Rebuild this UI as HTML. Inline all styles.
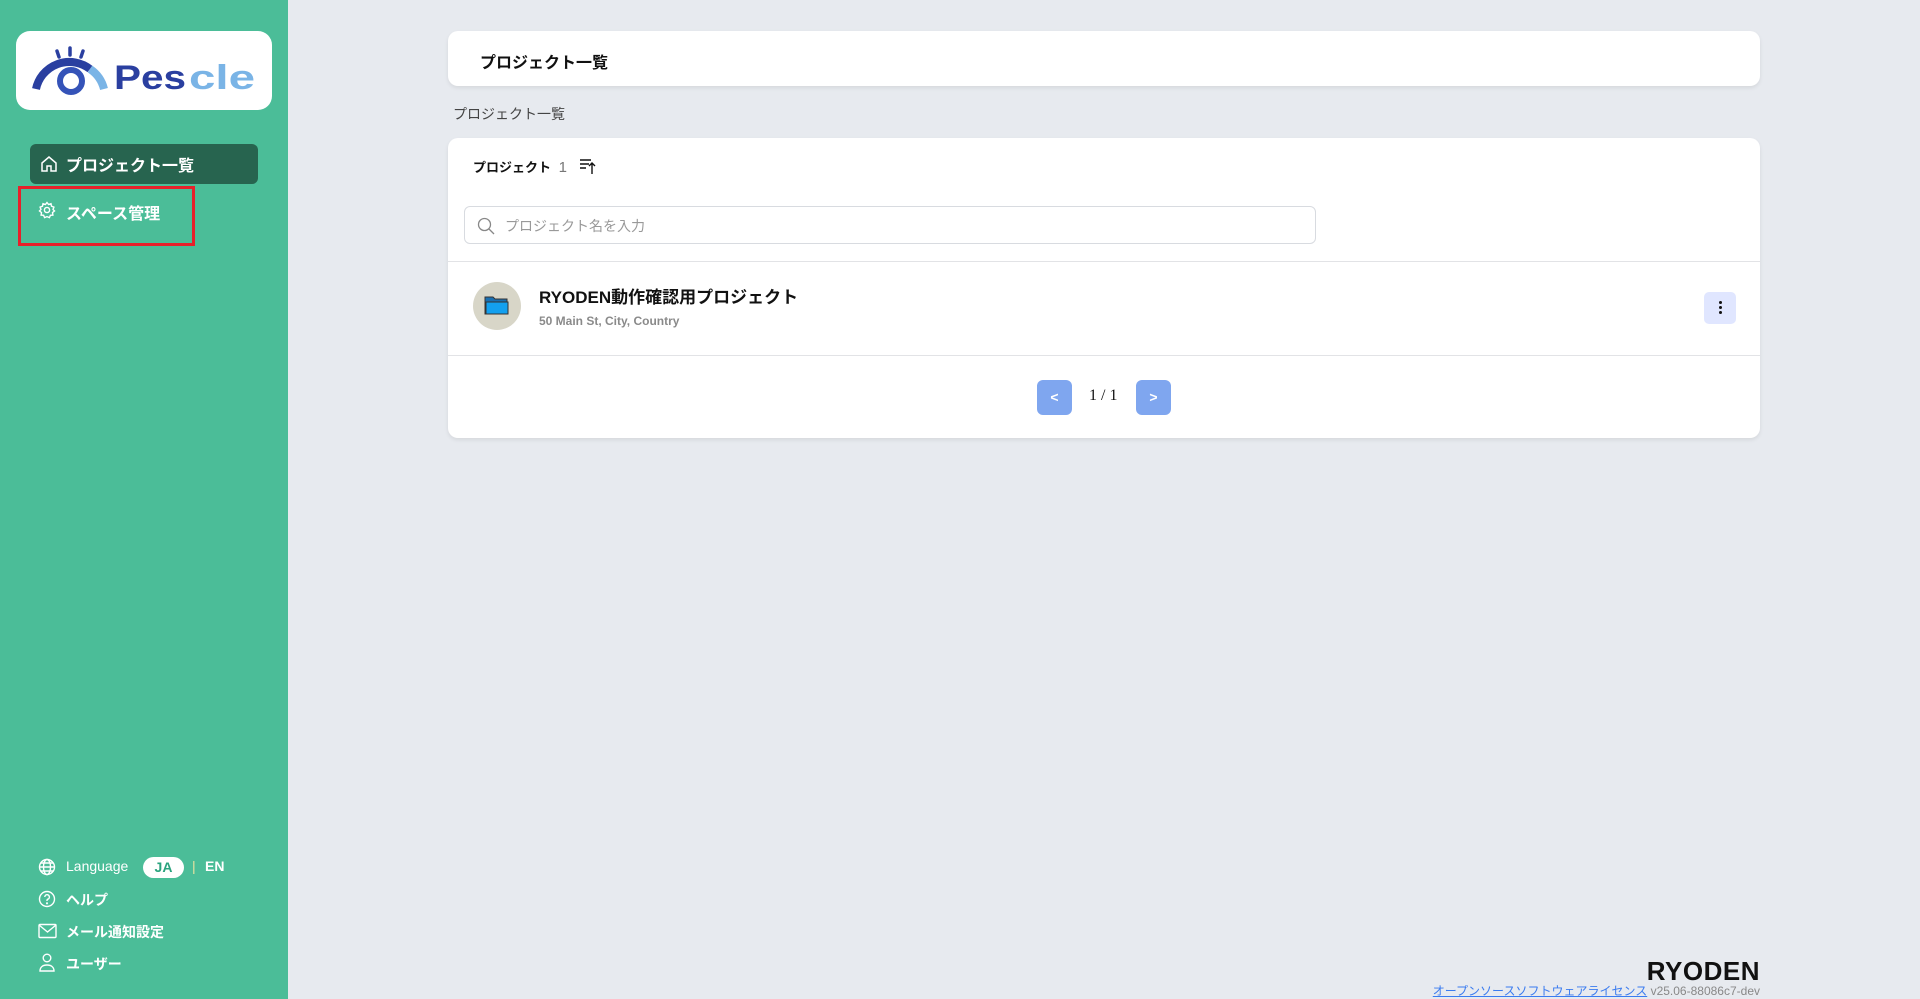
<!DOCTYPE html>
<html><head><meta charset="utf-8"><style>
*{box-sizing:border-box;margin:0;padding:0}
body{width:1920px;height:999px;overflow:hidden;background:#e7eaef;font-family:"Liberation Sans","Noto Sans CJK JP",sans-serif;position:relative;color:#111}
.side{position:absolute;left:0;top:0;width:288px;height:999px;background:#4bbd98}
.logo{position:absolute;left:16px;top:31px;width:256px;height:79px;background:#fff;border-radius:14px}
.nav{position:absolute;left:30px;top:144px;width:228px;height:40px;background:#27644f;border-radius:6px;color:#fff;font-size:16px;font-weight:bold;display:flex;align-items:center;padding-left:36px}
.nav2{position:absolute;left:66px;top:200px;color:#fff;font-size:16px;font-weight:bold}
.red{position:absolute;left:18px;top:186px;width:177px;height:60px;border:3px solid #e8202a}
.bi{position:absolute;left:66px;color:#fff;font-size:14px;font-weight:bold}
.ic{position:absolute;left:38px}
.card{position:absolute;left:448px;width:1312px;background:#fff;border-radius:10px;box-shadow:0 2px 4px rgba(0,0,0,.08)}
</style></head><body>
<div class="side">
 <div class="logo">
  <svg width="256" height="79" viewBox="0 0 256 79">
   <g stroke="#2a3fa0" stroke-width="3.5" stroke-linecap="round"><line x1="41" y1="20" x2="43" y2="26"/><line x1="54" y1="17" x2="54" y2="24"/><line x1="67" y1="20" x2="65" y2="26"/></g>
   <path d="M20 58 A34 34 0 0 1 74 38" fill="none" stroke="#2a3fa0" stroke-width="8"/>
   <path d="M74 38 A34 34 0 0 1 88 58" fill="none" stroke="#7ab4e6" stroke-width="8"/>
   <circle cx="55" cy="50" r="11" fill="none" stroke="#3553b8" stroke-width="6"/>
   <text x="98" y="58" font-family="Liberation Sans" font-weight="bold" font-size="34" fill="#2a3fa0" textLength="72" lengthAdjust="spacingAndGlyphs">Pes</text>
   <text x="173" y="58" font-family="Liberation Sans" font-weight="bold" font-size="34" fill="#7ab4e6" textLength="66" lengthAdjust="spacingAndGlyphs">cle</text>
  </svg>
 </div>
 <div class="nav"><svg style="position:absolute;left:10px;top:11px" width="18" height="18" viewBox="0 0 18 18" fill="none" stroke="#fff" stroke-width="1.5"><path d="M2 8L9 2l7 6v8H11v-5H7v5H2z"/></svg>プロジェクト一覧</div>
 <svg class="ic" style="top:201px" width="18" height="18" viewBox="0 0 18 18" fill="none" stroke="#fff" stroke-width="1.4"><circle cx="9" cy="9" r="2.6"/><path d="M9 1.5l1.6 2 2.4-.8.5 2.5 2.4.9-.9 2.4 1.5 1.5-2 1.6.4 2.5-2.5.2-1 2.3-2.4-1-2.4 1-1-2.3-2.5-.2.4-2.5-2-1.6 1.5-1.5-.9-2.4 2.4-.9.5-2.5 2.4.8z"/></svg>
 <div class="nav2">スペース管理</div>
 <div class="red"></div>
 <svg class="ic" style="top:858px" width="18" height="18" viewBox="0 0 18 18" fill="none" stroke="#fff" stroke-width="1.4"><circle cx="9" cy="9" r="7.5"/><ellipse cx="9" cy="9" rx="3.5" ry="7.5"/><path d="M1.5 9h15M3 5h12M3 13h12"/></svg>
 <div class="bi" style="top:858px;font-weight:normal">Language</div>
 <div style="position:absolute;left:143px;top:857px;width:41px;height:21px;border-radius:11px;background:#fff;color:#2aa37e;font-size:14px;font-weight:bold;text-align:center;line-height:21px">JA</div>
 <div class="bi" style="left:192px;top:858px;color:#e8e3a0;font-weight:normal">|</div>
 <div class="bi" style="left:205px;top:858px">EN</div>
 <svg class="ic" style="top:890px" width="18" height="18" viewBox="0 0 18 18" fill="none" stroke="#fff" stroke-width="1.4"><circle cx="9" cy="9" r="7.5"/><path d="M6.8 7a2.3 2.3 0 1 1 2.9 2.2c-.5.2-.7.6-.7 1.2v.6"/><circle cx="9" cy="13.3" r=".4" fill="#fff"/></svg>
 <div class="bi" style="top:890px">ヘルプ</div>
 <svg class="ic" style="top:923px" width="19" height="16" viewBox="0 0 19 16" fill="none" stroke="#fff" stroke-width="1.4"><rect x="1" y="1.5" width="17" height="13" rx="1"/><path d="M1 2l8.5 7L18 2"/></svg>
 <div class="bi" style="top:922px">メール通知設定</div>
 <svg class="ic" style="top:953px" width="18" height="19" viewBox="0 0 18 19" fill="none" stroke="#fff" stroke-width="1.4"><circle cx="9" cy="5" r="3.8"/><path d="M2 18c0-4 3-6 7-6s7 2 7 6z"/></svg>
 <div class="bi" style="top:954px">ユーザー</div>
</div>

<div class="card" style="top:31px;height:55px"><div style="position:absolute;left:32px;top:18px;font-size:16px;font-weight:bold">プロジェクト一覧</div></div>
<div style="position:absolute;left:453px;top:104px;font-size:14px;color:#444">プロジェクト一覧</div>

<div class="card" style="top:138px;height:300px">
 <div style="position:absolute;left:25px;top:19px;font-size:13px;font-weight:bold">プロジェクト <span style="font-weight:normal;color:#777;margin-left:4px;font-size:15px">1</span></div>
 <svg style="position:absolute;left:131px;top:19px" width="18" height="18" viewBox="0 0 18 18" fill="none" stroke="#111" stroke-width="1.4"><path d="M1 3h11M1 7h9M1 11h6M13 17V6M10 9l3-3 3 3"/></svg>
 <div style="position:absolute;left:16px;top:68px;width:852px;height:38px;border:1px solid #d8dbe0;border-radius:6px">
  <svg style="position:absolute;left:12px;top:10px" width="18" height="18" viewBox="0 0 18 18" fill="none" stroke="#888" stroke-width="1.3"><circle cx="7.5" cy="7.5" r="6"/><path d="M12 12l5 5"/></svg>
  <div style="position:absolute;left:40px;top:9px;font-size:14px;color:#999">プロジェクト名を入力</div>
 </div>
 <div style="position:absolute;left:0;top:123px;width:100%;height:1px;background:#e2e3e6"></div>
 <div style="position:absolute;left:25px;top:144px;width:48px;height:48px;border-radius:50%;background:#d8d6c8">
  <svg style="position:absolute;left:11px;top:12px" width="26" height="22" viewBox="0 0 26 22"><path d="M1 3h8l2 2h12v15H1z" fill="#1a6fb0" stroke="#333" stroke-width="1"/><path d="M2 8h22v12H2z" fill="#13a0ef" stroke="#333" stroke-width="1"/></svg>
 </div>
 <div style="position:absolute;left:91px;top:145px;font-size:17px;font-weight:bold">RYODEN動作確認用プロジェクト</div>
 <div style="position:absolute;left:91px;top:176px;font-size:12px;font-weight:bold;color:#8a8a8a">50 Main St, City, Country</div>
 <div style="position:absolute;left:1256px;top:154px;width:32px;height:32px;border-radius:5px;background:#e0e6ff">
  <div style="position:absolute;left:15px;top:9px;width:3px;height:3px;border-radius:50%;background:#111;box-shadow:0 5px 0 #111,0 10px 0 #111"></div>
 </div>
 <div style="position:absolute;left:0;top:217px;width:100%;height:1px;background:#e2e3e6"></div>
 <div style="position:absolute;left:589px;top:242px;width:35px;height:35px;border-radius:6px;background:#7fa6ef;color:#fff;font-weight:bold;text-align:center;line-height:35px;font-size:14px">&lt;</div>
 <div style="position:absolute;left:641px;top:249px;font-size:16px;font-family:'Liberation Serif',serif">1 / 1</div>
 <div style="position:absolute;left:688px;top:242px;width:35px;height:35px;border-radius:6px;background:#7fa6ef;color:#fff;font-weight:bold;text-align:center;line-height:35px;font-size:14px">&gt;</div>
</div>

<div style="position:absolute;right:160px;top:956px;font-size:26px;font-weight:bold;color:#111;letter-spacing:0.5px">RYODEN</div>
<div style="position:absolute;right:160px;top:982px;font-size:12px;white-space:nowrap"><span style="color:#3a7bef;text-decoration:underline">オープンソースソフトウェアライセンス</span> <span style="color:#888">v25.06-88086c7-dev</span></div>
</body></html>
